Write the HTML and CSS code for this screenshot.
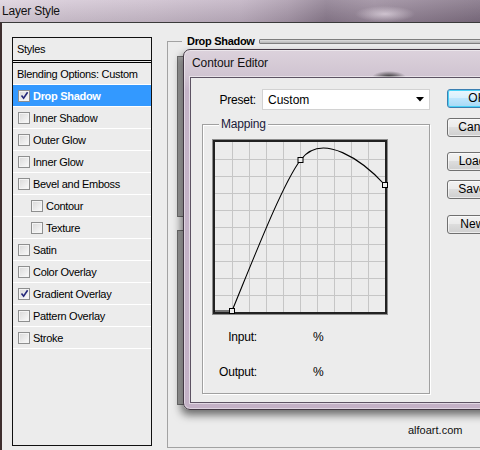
FILE: index.html
```html
<!DOCTYPE html>
<html lang="en">
<head>
<meta charset="UTF-8">
<title>Layer Style</title>
<link rel="stylesheet" href="styles.css">
</head>
<body>

<div class="window">
  <div class="titlebar">Layer Style</div>

  <div class="client">
    <!-- left list of effects -->
    <div class="styles-panel">
      <div class="styles-head">Styles</div>
      <ul class="styles-list">
        <li class="style-row plain">Blending Options: Custom</li>
        <li class="style-row selected"><span class="check"><svg width="9" height="9" viewBox="0 0 9 9"><path d="M1.5 4.5 L3.6 7.2 L7.6 1.2" fill="none" stroke="#25297a" stroke-width="1.6"/></svg></span>Drop Shadow</li>
        <li class="style-row"><span class="check"></span>Inner Shadow</li>
        <li class="style-row"><span class="check"></span>Outer Glow</li>
        <li class="style-row"><span class="check"></span>Inner Glow</li>
        <li class="style-row"><span class="check"></span>Bevel and Emboss</li>
        <li class="style-row sub"><span class="check"></span>Contour</li>
        <li class="style-row sub"><span class="check"></span>Texture</li>
        <li class="style-row"><span class="check"></span>Satin</li>
        <li class="style-row"><span class="check"></span>Color Overlay</li>
        <li class="style-row"><span class="check"><svg width="9" height="9" viewBox="0 0 9 9"><path d="M1.5 4.5 L3.6 7.2 L7.6 1.2" fill="none" stroke="#25297a" stroke-width="1.6"/></svg></span>Gradient Overlay</li>
        <li class="style-row"><span class="check"></span>Pattern Overlay</li>
        <li class="style-row"><span class="check"></span>Stroke</li>
      </ul>
    </div>

    <!-- drop shadow settings (mostly hidden by the contour editor) -->
    <div class="effect-group">
      <div class="effect-head">
        <span class="lead"></span>
        <span class="effect-label">Drop Shadow</span>
        <span class="rule"></span>
      </div>
      <div class="sub-box structure"></div>
      <div class="sub-box quality"></div>
      <div class="credit">alfoart.com</div>
    </div>

    <!-- contour editor dialog floating over the layer style window -->
    <div class="contour-editor">
      <div class="ce-title">Contour Editor</div>
      <div class="ce-content">
        <div class="ce-main">
          <div class="preset-row">
            <span class="preset-label">Preset:</span>
            <div class="select">
              <span>Custom</span>
              <svg width="8" height="5" viewBox="0 0 8 5"><path d="M0 0 H8 L4 4.5 Z" fill="#000"/></svg>
            </div>
          </div>

          <div class="mapping">
            <div class="mapping-label">Mapping</div>
            <svg class="graph" width="176" height="176" viewBox="0 0 176 176">
              <rect x="0" y="0" width="176" height="176" fill="#8c8c8c"/>
              <rect x="1" y="1" width="174" height="174" fill="#222"/>
              <rect x="3" y="3" width="170" height="170" fill="#ececec"/>
              <g stroke="#c6c6c6" stroke-width="1">
                <path d="M20.5 3 V173 M37.5 3 V173 M54.5 3 V173 M71.5 3 V173 M88.5 3 V173 M105.5 3 V173 M122.5 3 V173 M139.5 3 V173 M156.5 3 V173"/>
                <path d="M3 20.5 H173 M3 37.5 H173 M3 54.5 H173 M3 71.5 H173 M3 88.5 H173 M3 105.5 H173 M3 122.5 H173 M3 139.5 H173 M3 156.5 H173"/>
              </g>
              <path d="M2 172 L20 172 C43 116, 70.5 45, 88.5 21 C110 -8, 151 22, 173 46" fill="none" stroke="#000" stroke-width="1.1"/>
              <g fill="#ececec" stroke="#000" stroke-width="1">
                <rect x="17.5" y="169.5" width="5" height="5"/>
                <rect x="86" y="18.5" width="5" height="5"/>
                <rect x="170.5" y="43.5" width="5" height="5"/>
              </g>
            </svg>
            <div class="io-row first"><span class="io-label">Input:</span><span class="io-value">%</span></div>
            <div class="io-row"><span class="io-label">Output:</span><span class="io-value">%</span></div>
          </div>
        </div>

        <div class="ce-buttons">
          <div class="btn default">OK</div>
          <div class="btn gap-a">Cancel</div>
          <div class="btn gap-b">Load...</div>
          <div class="btn gap-c">Save...</div>
          <div class="btn gap-d">New...</div>
        </div>
      </div>
    </div>
  </div>
</div>

</body>
</html>
```

FILE: styles.css
```css
/* General */
* {
  box-sizing: border-box;
}

body {
  margin: 0;
  width: 480px;
  height: 450px;
  overflow: hidden;
  font-family: "Liberation Sans", Arial, sans-serif;
  font-size: 11px;
  color: #000;
  background-color: #ececec;
}

.window {
  width: 480px;
  height: 450px;
  display: flex;
  flex-direction: column;
}

/* blurred aero title bar */
.titlebar {
  height: 22px;
  padding: 3px 0 0 2px;
  font-size: 12px;
  line-height: 16px;
  letter-spacing: -0.2px;
  color: #111;
  background:
    radial-gradient(ellipse 30px 8px at 385px 14px, rgba(230, 220, 230, 0.7), transparent),
    linear-gradient(180deg, rgba(255, 255, 255, 0.15), rgba(0, 0, 0, 0.08)),
    linear-gradient(90deg, #ddd2dd 0%, #d3c6d4 14%, #cbbdcc 32%, #bfb0c1 50%, #a898aa 60%, #8b7b8e 68%, #9a8a9c 78%, #7f6f82 100%);
}

.client {
  flex: 1;
  position: relative;
  display: flex;
  align-items: flex-start;
  padding: 14px 0 0 10px;
  border-top: 1px solid #3a3a3a;
  border-left: 2px solid #3d2e2e;
  background-color: #ececec;
  overflow: hidden;
}

/* Styles list */
.styles-panel {
  flex: none;
  width: 140px;
  height: 409px;
  border: 1px solid #111;
  background-color: #ececec;
}

.styles-head {
  height: 25px;
  padding-left: 4px;
  line-height: 22px;
  border-bottom: 3px double #000;
  letter-spacing: -0.3px;
}

.styles-list {
  list-style: none;
  margin: 0;
  padding: 0;
}

.style-row {
  display: flex;
  align-items: center;
  height: 22px;
  padding-left: 5px;
  border-bottom: 1px solid #fff;
  letter-spacing: -0.3px;
  white-space: nowrap;
}

.style-row.plain {
  padding-left: 4px;
}

.style-row.sub {
  padding-left: 18px;
}

.style-row.selected {
  background-color: #3399ff;
  color: #fff;
  font-weight: bold;
}

.check {
  flex: none;
  display: flex;
  align-items: center;
  justify-content: center;
  width: 12px;
  height: 12px;
  margin-right: 3px;
  border: 1px solid #8e8f8f;
  background: linear-gradient(135deg, #d8d8d8, #fbfbfb);
  box-shadow: inset 0 0 0 1px #f4f4f4;
}

/* Drop shadow group behind the dialog */
.effect-group {
  flex: none;
  width: 340px;
  height: 407px;
  margin: 4px 0 0 15px;
  border-left: 1px solid #a2a2a2;
  border-bottom: 1px solid #a2a2a2;
}

.effect-head {
  display: flex;
  align-items: center;
  height: 12px;
  margin-top: -6px;
}

.effect-head .lead {
  width: 14px;
  height: 1px;
  background-color: #a2a2a2;
}

.effect-label {
  padding: 0 4px 0 5px;
  font-weight: bold;
  letter-spacing: -0.3px;
}

.effect-head .rule {
  flex: 1;
  height: 5px;
  border: 1px solid #7e7e7e;
  border-radius: 1px;
  background: linear-gradient(#dedede, #b4b4b4);
}

.sub-box {
  width: 300px;
  margin-left: 9px;
  border: 1px solid #707070;
  background: linear-gradient(90deg, #9c9c9c, #c8c8c8 6px);
}

.sub-box.structure {
  height: 161px;
  margin-top: 9px;
}

.sub-box.quality {
  height: 175px;
  margin-top: 13px;
}

.credit {
  margin-top: 18px;
  padding-left: 240px;
  line-height: 14px;
  color: #111;
}

/* Contour editor */
.contour-editor {
  position: absolute;
  left: 181px;
  top: 26px;
  width: 320px;
  height: 361px;
  padding: 0 0 6px 6px;
  border: 1px solid #433844;
  border-radius: 7px;
  background:
    radial-gradient(ellipse 17px 6px at 205px 27px, rgba(20, 20, 20, 0.85), transparent),
    linear-gradient(180deg, #dcd2dc 0, #d0c4d1 26px, #c5b4c8 40px, #c3b1c6 100%);
  box-shadow: inset 0 0 0 1px rgba(255, 255, 255, 0.45), -2px 5px 9px rgba(0, 0, 0, 0.55);
  display: flex;
  flex-direction: column;
}

.ce-title {
  height: 27px;
  padding: 4px 0 0 2px;
  font-size: 12px;
  line-height: 18px;
  letter-spacing: -0.1px;
  color: #111;
}

.ce-content {
  flex: 1;
  display: flex;
  border: 1px solid #5d5363;
  background-color: #ececec;
  box-shadow: 0 0 0 1px rgba(255, 255, 255, 0.5);
}

.ce-main {
  flex: none;
  width: 250px;
  padding-top: 11px;
}

.preset-row {
  display: flex;
  align-items: center;
  height: 21px;
}

.preset-label {
  width: 65px;
  text-align: right;
  font-size: 12px;
  letter-spacing: -0.2px;
}

.select {
  display: flex;
  align-items: center;
  justify-content: space-between;
  width: 168px;
  height: 21px;
  margin-left: 6px;
  padding: 0 5px 0 5px;
  border: 1px solid #d2d2d2;
  background-color: #fff;
  font-size: 12px;
}

.mapping {
  width: 228px;
  margin: 14px 0 0 11px;
  padding: 0 0 14px 9px;
  border: 1px solid #a0a0a0;
  box-shadow: inset 1px 1px 0 #fff, 1px 1px 0 #fff;
}

.mapping-label {
  width: max-content;
  margin: -8px 0 0 7px;
  padding: 0 2px;
  line-height: 14px;
  font-size: 12px;
  letter-spacing: -0.2px;
  color: #1a1a3a;
  background-color: #ececec;
}

.graph {
  display: block;
  margin-top: 8px;
}

.io-row {
  display: flex;
  height: 14px;
  margin-top: 21px;
  line-height: 14px;
  font-size: 12px;
}

.io-row.first {
  margin-top: 15px;
}

.io-label {
  width: 45px;
  text-align: right;
  letter-spacing: -0.2px;
}

.io-value {
  margin-left: 56px;
}

/* dialog buttons, cut off by the right edge */
.ce-buttons {
  margin-left: 6px;
  padding-top: 11px;
}

.btn {
  width: 60px;
  height: 19px;
  line-height: 17px;
  text-align: center;
  font-size: 12px;
  border: 1px solid #707070;
  border-radius: 3px;
  background: linear-gradient(#f2f2f2 0%, #ebebeb 45%, #dddddd 50%, #cfcfcf 100%);
  box-shadow: inset 0 0 0 1px rgba(255, 255, 255, 0.6);
}

.btn.default {
  border-color: #3c7fb1;
  background: linear-gradient(#eaf6fd 0%, #d9f0fc 45%, #bee6fd 50%, #a7d9f5 100%);
  box-shadow: inset 0 0 0 1px #48d1f6;
}

.btn.gap-a {
  margin-top: 10px;
}

.btn.gap-b {
  margin-top: 15px;
}

.btn.gap-c {
  margin-top: 9px;
}

.btn.gap-d {
  margin-top: 16px;
}
```
